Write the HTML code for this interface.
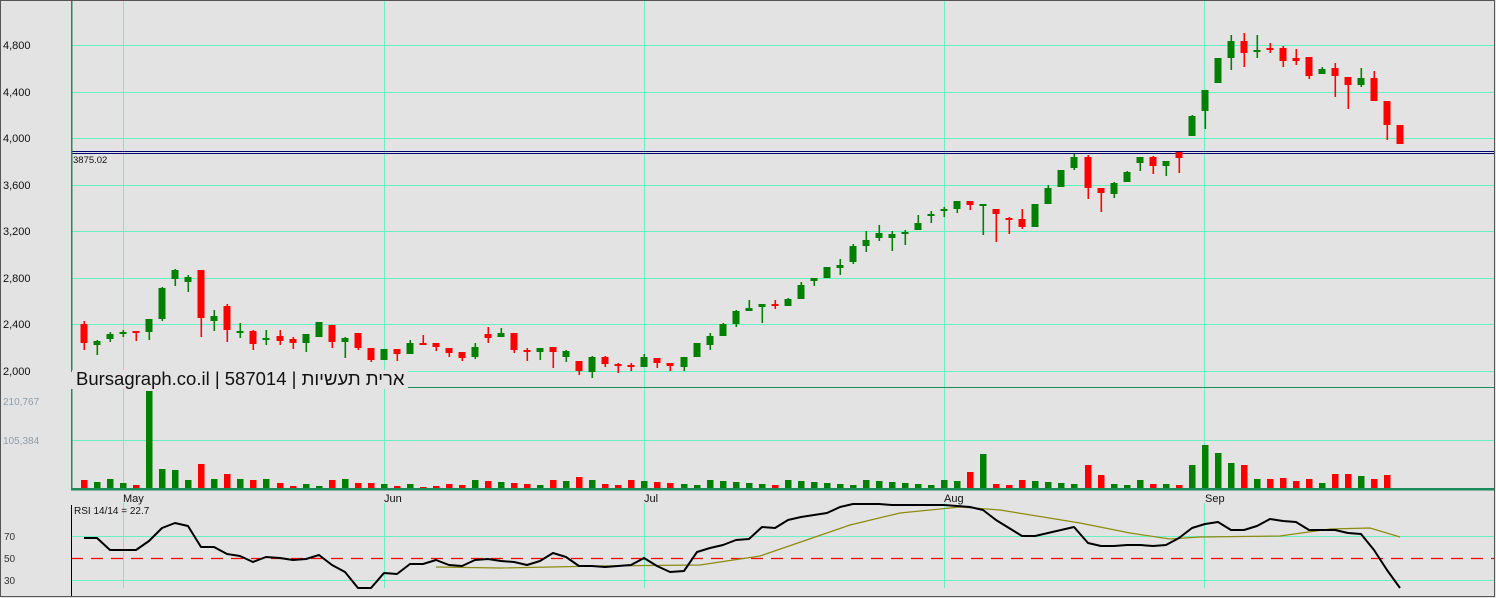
<!DOCTYPE html>
<html><head><meta charset="utf-8"><style>
html,body{margin:0;padding:0;background:#e3e3e3;}
svg{display:block;font-family:"Liberation Sans",Arial,sans-serif;}
</style></head><body>
<svg id="s" width="1496" height="598" viewBox="0 0 1496 598" xmlns="http://www.w3.org/2000/svg">
<rect width="1496" height="598" fill="#e3e3e3"/>
<g id="grid" stroke="#66f2c0" stroke-width="1" shape-rendering="crispEdges">
<line x1="71" y1="45.5" x2="1494" y2="45.5"/>
<line x1="71" y1="92.5" x2="1494" y2="92.5"/>
<line x1="71" y1="138.5" x2="1494" y2="138.5"/>
<line x1="71" y1="185.5" x2="1494" y2="185.5"/>
<line x1="71" y1="231.5" x2="1494" y2="231.5"/>
<line x1="71" y1="278.5" x2="1494" y2="278.5"/>
<line x1="71" y1="324.5" x2="1494" y2="324.5"/>
<line x1="71" y1="371.5" x2="1494" y2="371.5"/>
<line x1="71" y1="440.5" x2="1494" y2="440.5"/>
<line x1="71" y1="536.5" x2="1494" y2="536.5"/>
<line x1="71" y1="580.5" x2="1494" y2="580.5"/>
<line x1="123.5" y1="0" x2="123.5" y2="489"/><line x1="123.5" y1="503" x2="123.5" y2="588"/>
<line x1="384.5" y1="0" x2="384.5" y2="489"/><line x1="384.5" y1="503" x2="384.5" y2="588"/>
<line x1="644.5" y1="0" x2="644.5" y2="489"/><line x1="644.5" y1="503" x2="644.5" y2="588"/>
<line x1="944.5" y1="0" x2="944.5" y2="489"/><line x1="944.5" y1="503" x2="944.5" y2="588"/>
<line x1="1204.5" y1="0" x2="1204.5" y2="489"/><line x1="1204.5" y1="503" x2="1204.5" y2="588"/>
</g>
<line x1="71" y1="558.5" x2="1494" y2="558.5" stroke="#ff0000" stroke-width="1.3" stroke-dasharray="12,8"/>
<g shape-rendering="crispEdges">
<line x1="71" y1="151.5" x2="1494" y2="151.5" stroke="#000070"/>
<line x1="71" y1="153.5" x2="1494" y2="153.5" stroke="#000070"/>
<line x1="408" y1="387.5" x2="1494" y2="387.5" stroke="#1e8a5e"/>
<line x1="71.5" y1="0" x2="71.5" y2="372" stroke="#1e8a5e" stroke-width="1.5"/>
<line x1="71.5" y1="389" x2="71.5" y2="490" stroke="#1e8a5e" stroke-width="1.5"/>
<line x1="71" y1="489" x2="1494" y2="489" stroke="#1e8a5e" stroke-width="2.5"/>
<line x1="71.5" y1="505" x2="71.5" y2="596" stroke="#000" stroke-width="1"/>
<rect x="0.5" y="0.5" width="1494" height="596" fill="none" stroke="#555"/>
</g>
<g id="c"></g>
<g font-size="11" fill="#111">
<text x="3" y="49">4,800</text><text x="3" y="96">4,400</text><text x="3" y="142">4,000</text>
<text x="3" y="189">3,600</text><text x="3" y="235">3,200</text><text x="3" y="282">2,800</text>
<text x="3" y="328">2,400</text><text x="3" y="375">2,000</text>
<text x="73" y="163" font-size="9.5">3875.02</text>
<text x="3" y="405" fill="#8f9ca8" font-size="10">210,767</text>
<text x="3" y="444" fill="#8f9ca8" font-size="10">105,384</text>
<text x="123" y="502" font-size="11">May</text><text x="384" y="502" font-size="11">Jun</text>
<text x="644" y="502" font-size="11">Jul</text><text x="944" y="502" font-size="11">Aug</text>
<text x="1205" y="502" font-size="11">Sep</text>
<text x="74" y="514" font-size="10">RSI 14/14 = 22.7</text>
<text x="4" y="540" font-size="10" fill="#333">70</text><text x="4" y="562" font-size="10" fill="#333">50</text><text x="4" y="584" font-size="10" fill="#333">30</text>
</g>
<text x="76" y="385" font-size="18.5" fill="#111" style="font-family:'Liberation Sans','DejaVu Sans',sans-serif">Bursagraph.co.il | 587014 | ארית תעשיות</text>
</svg>
<script>
var C=[
[84,324,343,321,350,'r'],[97,341,345,340,355,'g'],[110,334,339,332,342,'g'],[123,332,333,330,337,'g'],[136,331,332,331,341,'r'],
[149,319,332,319,340,'g'],[162,288,319,287,321,'g'],[175,270,279,269,286,'g'],[188,277,282,275,292,'g'],[201,270,318,270,337,'r'],
[214,316,321,310,331,'g'],[227,306,330,304,342,'r'],[240,331,332,323,338,'g'],[253,331,344,330,350,'r'],[266,338,340,330,345,'g'],
[280,336,341,330,345,'r'],[293,339,343,337,349,'r'],[306,334,343,334,352,'g'],[319,322,337,322,337,'g'],[332,325,342,325,348,'r'],
[345,338,342,337,358,'g'],[358,333,348,333,350,'r'],[371,348,360,348,362,'r'],[384,349,360,349,360,'g'],[397,349,354,349,361,'r'],
[410,343,354,340,354,'g'],[423,343,344,335,344,'r'],[436,343,347,343,351,'r'],[449,348,353,348,357,'r'],[462,352,358,352,361,'r'],
[475,347,357,343,359,'g'],[488,334,338,327,343,'r'],[501,333,337,328,337,'g'],[514,333,350,333,353,'r'],[527,350,352,348,361,'r'],
[540,348,352,348,360,'g'],[553,347,352,347,368,'r'],[566,351,357,350,362,'g'],[579,361,371,361,375,'r'],[592,357,372,356,378,'g'],
[605,357,364,356,367,'r'],[618,364,365,363,373,'r'],[631,365,367,363,371,'r'],[644,357,367,354,367,'g'],[657,358,363,358,368,'r'],
[670,363,366,363,371,'r'],[684,357,367,357,371,'g'],[697,343,357,343,357,'g'],[710,336,345,333,350,'g'],[723,324,336,323,336,'g'],
[736,311,324,310,327,'g'],[749,308,311,300,311,'g'],[762,304,307,304,323,'g'],[775,304,305,300,309,'r'],[788,299,306,298,306,'g'],
[801,285,299,282,299,'g'],[814,278,281,278,286,'g'],[827,267,278,267,278,'g'],[840,265,268,259,275,'g'],[853,246,262,244,264,'g'],
[866,240,246,231,252,'g'],[879,233,238,225,241,'g'],[892,234,238,231,251,'g'],[905,232,234,230,245,'g'],[918,223,230,215,230,'g'],
[931,214,215,211,223,'g'],[944,209,211,207,217,'g'],[957,201,209,201,213,'g'],[970,201,205,201,210,'r'],[983,204,206,204,235,'g'],
[996,209,214,209,242,'r'],[1009,218,219,217,234,'r'],[1022,219,227,209,229,'r'],[1035,204,227,204,227,'g'],[1048,188,204,185,204,'g'],
[1061,170,187,170,187,'g'],[1074,157,168,154,170,'g'],[1088,157,188,155,199,'r'],[1101,188,193,188,212,'r'],[1114,183,194,182,198,'g'],
[1127,172,182,171,182,'g'],[1140,157,163,157,171,'g'],[1153,157,166,156,174,'r'],[1166,161,166,161,176,'g'],[1179,152,158,152,173,'r'],
[1192,116,136,115,136,'g'],[1205,90,111,90,129,'g'],[1218,58,83,58,83,'g'],[1231,41,58,35,70,'g'],[1244,41,53,33,67,'r'],
[1257,50,51,35,58,'g'],[1270,48,49,43,53,'r'],[1283,48,61,46,67,'r'],[1296,58,61,49,65,'r'],[1309,57,76,57,79,'r'],
[1322,69,74,67,74,'g'],[1335,68,76,63,97,'r'],[1348,77,85,77,109,'r'],[1361,78,85,68,87,'g'],[1374,78,101,71,101,'r'],
[1387,101,125,101,140,'r'],[1400,125,144,125,144,'r']];
var V={84:480,97:482,110:479,123:483,136:485,149:391,162:469,175:470,188:480,201:464,214:479,227:474,240:479,253:480,266:479,280:483,293:486,306:484,319:486,332:480,345:479,358:483,371:483,384:484,397:486,410:484,423:487,436:486,579:477,592:480,983:454,970:472,1088:465,1192:465,1205:445,1218:453,1231:463,1244:465,1101:475,1114:484,1127:485,1140:480,1153:484,1166:484,1179:485,1257:479,1270:479,1283:478,1296:481,1309:479,1322:483,1335:474,1348:474,1361:476,1374:479,1387:475,1400:489};
var h='';
C.forEach(function(c,i){
 var col=c[5]=='g'?'#008000':'#ff0000';
 h+='<rect x="'+(c[0]-0.5)+'" y="'+c[3]+'" width="1.6" height="'+Math.max(1,c[4]-c[3])+'" fill="'+col+'"/>';
 h+='<rect x="'+(c[0]-3.5)+'" y="'+c[1]+'" width="7" height="'+Math.max(2,c[2]-c[1])+'" fill="'+col+'"/>';
 if(c[0]<1400){var t=V[c[0]]||(480+((i*7)%6));
 h+='<rect x="'+(c[0]-3)+'" y="'+t+'" width="6.5" height="'+(488-t)+'" fill="'+col+'"/>';}
});
var R=[[84,538],[97,538],[110,550],[123,550],[136,550],[149,541],[162,528],[175,523],[188,526],[201,547],[214,547],[227,554],[240,556],[253,562],[266,557],[280,558],[293,560],[306,559],[319,555],[332,565],[345,572],[358,588],[371,588],[384,573],[397,574],[410,564],[423,564],[436,560],[449,565],[462,566],[475,560],[488,559],[501,561],[514,562],[527,565],[540,561],[553,553],[566,557],[579,566],[592,566],[605,567],[618,566],[631,565],[644,558],[657,566],[670,572],[684,571],[697,552],[710,548],[723,545],[736,540],[749,539],[762,527],[775,528],[788,520],[801,517],[814,515],[827,513],[840,507],[853,504],[866,504],[879,504],[892,505],[905,505],[918,505],[931,505],[944,505],[957,506],[970,507],[983,510],[996,520],[1009,528],[1022,536],[1035,536],[1048,533],[1061,530],[1074,527],[1088,543],[1101,546],[1114,546],[1127,545],[1140,545],[1153,546],[1166,545],[1179,538],[1192,528],[1205,524],[1218,522],[1231,530],[1244,530],[1257,526],[1270,519],[1283,521],[1296,522],[1309,530],[1322,530],[1335,530],[1348,533],[1361,534],[1374,550],[1387,570],[1400,588]];
var M=[[436,567],[500,568],[600,566],[700,565],[760,556],[850,525],[900,513],[960,507],[1000,510],[1080,523],[1130,533],[1170,539],[1200,537],[1280,536],[1330,529],[1370,528],[1400,537]];
function pl(a){return a.map(function(p){return p[0]+','+p[1]}).join(' ');}
h+='<polyline points="'+pl(M)+'" fill="none" stroke="#8b8b10" stroke-width="1.2"/>';
h+='<polyline points="'+pl(R)+'" fill="none" stroke="#000" stroke-width="2" stroke-linejoin="round"/>';
h+='<rect x="72" y="370" width="336" height="19" fill="#e3e3e3"/>';
document.getElementById('c').innerHTML=h;
</script>
</body></html>
